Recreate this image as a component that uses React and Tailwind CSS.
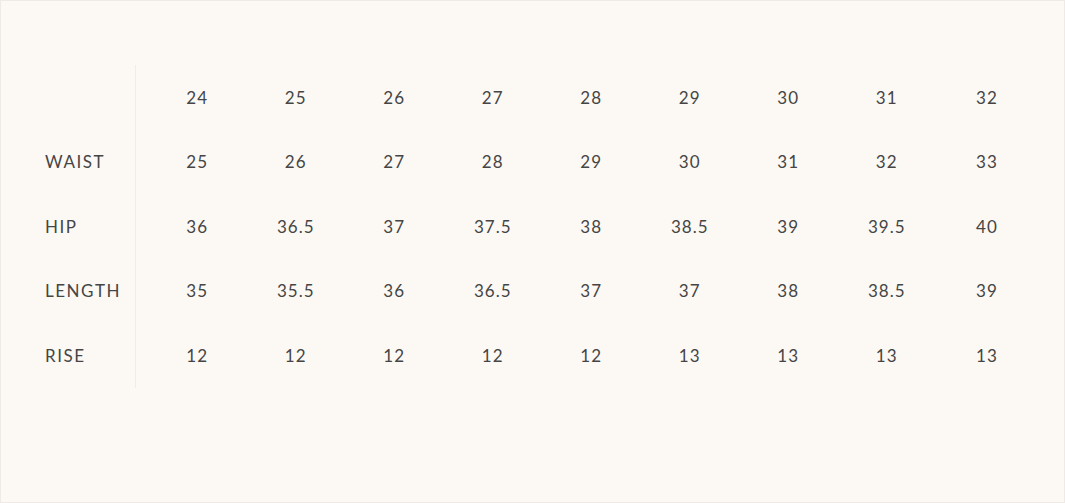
import React from 'react';

const sizes = ['24', '25', '26', '27', '28', '29', '30', '31', '32'];

const rows = [
  { label: 'WAIST', values: ['25', '26', '27', '28', '29', '30', '31', '32', '33'] },
  { label: 'HIP', values: ['36', '36.5', '37', '37.5', '38', '38.5', '39', '39.5', '40'] },
  { label: 'LENGTH', values: ['35', '35.5', '36', '36.5', '37', '37', '38', '38.5', '39'] },
  { label: 'RISE', values: ['12', '12', '12', '12', '12', '13', '13', '13', '13'] },
];

function Row({ label, values }) {
  return (
    <div className="flex h-[64.6px] items-center">
      <div className="flex h-full w-[135px] items-center border-r border-[#f1ece7] pl-[44px] tracking-[0.09em]">
        {label}
      </div>
      <div className="grid flex-1 grid-cols-[repeat(8,98.5px)_102px] pl-[12px] tracking-[0.06em]">
        {values.map((v, i) => (
          <div key={i} className="text-center">{v}</div>
        ))}
      </div>
    </div>
  );
}

export default function App() {
  return (
    <div className="h-[503px] w-[1065px] border border-[#efeae5] bg-[#fcf9f5] pt-[64px] text-[17px] text-[#454545] [font-family:Lato,'Open_Sans',sans-serif]">
      <Row label="" values={sizes} />
      {rows.map((r) => (
        <Row key={r.label} label={r.label} values={r.values} />
      ))}
    </div>
  );
}
